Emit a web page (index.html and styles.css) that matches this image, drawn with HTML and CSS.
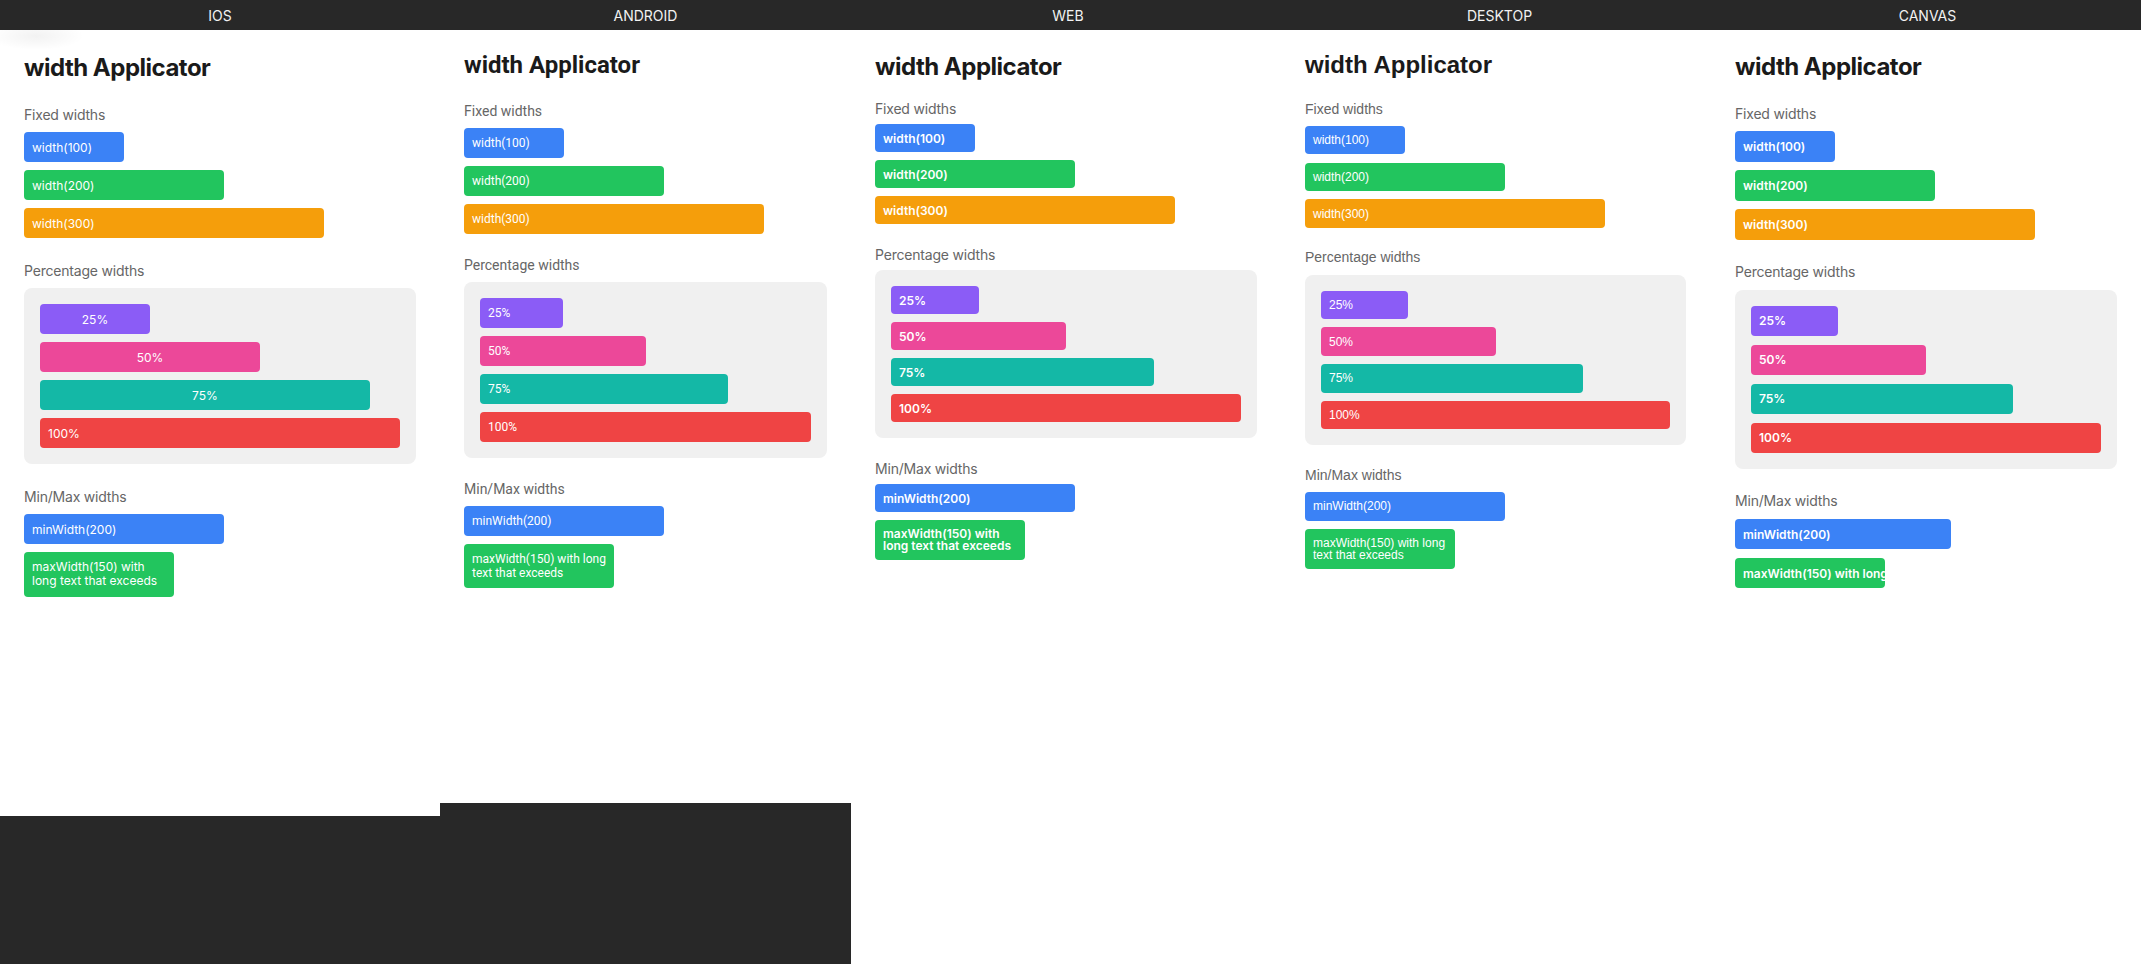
FILE: index.html
```html
<!DOCTYPE html>
<html lang="en">

<head>
    <meta charset="UTF-8" />
    <title>width Applicator</title>
    <meta name="viewport" content="width=device-width, initial-scale=1.0">
    <link rel="stylesheet" href="styles.css">
</head>

<body>
    <div class="platforms">
        <!-- iOS -->
        <section class="platform platform-ios">
            <header class="platform-label">IOS</header>
            <div class="screen">
                <h1 class="screen-title">width Applicator</h1>
                <div class="group">
                    <h2 class="group-label">Fixed widths</h2>
                    <div class="bar-list">
                        <div class="bar bar-blue w-100">width(100)</div>
                        <div class="bar bar-green w-200">width(200)</div>
                        <div class="bar bar-orange w-300">width(300)</div>
                    </div>
                </div>
                <div class="group">
                    <h2 class="group-label">Percentage widths</h2>
                    <div class="panel bar-list">
                        <div class="bar bar-purple pct-25 centered">25%</div>
                        <div class="bar bar-pink pct-50 centered">50%</div>
                        <div class="bar bar-teal pct-75 centered">75%</div>
                        <div class="bar bar-red pct-100">100%</div>
                    </div>
                </div>
                <div class="group">
                    <h2 class="group-label">Min/Max widths</h2>
                    <div class="bar-list">
                        <div class="bar bar-blue min-200">minWidth(200)</div>
                        <div class="bar bar-green max-150 multiline">maxWidth(150) with<br>long text that exceeds</div>
                    </div>
                </div>
            </div>
        </section>

        <!-- Android -->
        <section class="platform platform-android">
            <header class="platform-label">ANDROID</header>
            <div class="screen">
                <h1 class="screen-title">width Applicator</h1>
                <div class="group">
                    <h2 class="group-label">Fixed widths</h2>
                    <div class="bar-list">
                        <div class="bar bar-blue w-100">width(100)</div>
                        <div class="bar bar-green w-200">width(200)</div>
                        <div class="bar bar-orange w-300">width(300)</div>
                    </div>
                </div>
                <div class="group">
                    <h2 class="group-label">Percentage widths</h2>
                    <div class="panel bar-list">
                        <div class="bar bar-purple pct-25">25%</div>
                        <div class="bar bar-pink pct-50">50%</div>
                        <div class="bar bar-teal pct-75">75%</div>
                        <div class="bar bar-red pct-100">100%</div>
                    </div>
                </div>
                <div class="group">
                    <h2 class="group-label">Min/Max widths</h2>
                    <div class="bar-list">
                        <div class="bar bar-blue min-200">minWidth(200)</div>
                        <div class="bar bar-green max-150 multiline">maxWidth(150) with long<br>text that exceeds</div>
                    </div>
                </div>
            </div>
        </section>

        <!-- Web -->
        <section class="platform platform-web">
            <header class="platform-label">WEB</header>
            <div class="screen">
                <h1 class="screen-title">width Applicator</h1>
                <div class="group">
                    <h2 class="group-label">Fixed widths</h2>
                    <div class="bar-list">
                        <div class="bar bar-blue w-100">width(100)</div>
                        <div class="bar bar-green w-200">width(200)</div>
                        <div class="bar bar-orange w-300">width(300)</div>
                    </div>
                </div>
                <div class="group">
                    <h2 class="group-label">Percentage widths</h2>
                    <div class="panel bar-list">
                        <div class="bar bar-purple pct-25">25%</div>
                        <div class="bar bar-pink pct-50">50%</div>
                        <div class="bar bar-teal pct-75">75%</div>
                        <div class="bar bar-red pct-100">100%</div>
                    </div>
                </div>
                <div class="group">
                    <h2 class="group-label">Min/Max widths</h2>
                    <div class="bar-list">
                        <div class="bar bar-blue min-200">minWidth(200)</div>
                        <div class="bar bar-green max-150 multiline">maxWidth(150) with<br>long text that exceeds</div>
                    </div>
                </div>
            </div>
        </section>

        <!-- Desktop -->
        <section class="platform platform-desktop">
            <header class="platform-label">DESKTOP</header>
            <div class="screen">
                <h1 class="screen-title">width Applicator</h1>
                <div class="group">
                    <h2 class="group-label">Fixed widths</h2>
                    <div class="bar-list">
                        <div class="bar bar-blue w-100">width(100)</div>
                        <div class="bar bar-green w-200">width(200)</div>
                        <div class="bar bar-orange w-300">width(300)</div>
                    </div>
                </div>
                <div class="group">
                    <h2 class="group-label">Percentage widths</h2>
                    <div class="panel bar-list">
                        <div class="bar bar-purple pct-25">25%</div>
                        <div class="bar bar-pink pct-50">50%</div>
                        <div class="bar bar-teal pct-75">75%</div>
                        <div class="bar bar-red pct-100">100%</div>
                    </div>
                </div>
                <div class="group">
                    <h2 class="group-label">Min/Max widths</h2>
                    <div class="bar-list">
                        <div class="bar bar-blue min-200">minWidth(200)</div>
                        <div class="bar bar-green max-150 multiline">maxWidth(150) with long<br>text that exceeds</div>
                    </div>
                </div>
            </div>
        </section>

        <!-- Canvas -->
        <section class="platform platform-canvas">
            <header class="platform-label">CANVAS</header>
            <div class="screen">
                <h1 class="screen-title">width Applicator</h1>
                <div class="group">
                    <h2 class="group-label">Fixed widths</h2>
                    <div class="bar-list">
                        <div class="bar bar-blue w-100">width(100)</div>
                        <div class="bar bar-green w-200">width(200)</div>
                        <div class="bar bar-orange w-300">width(300)</div>
                    </div>
                </div>
                <div class="group">
                    <h2 class="group-label">Percentage widths</h2>
                    <div class="panel bar-list">
                        <div class="bar bar-purple pct-25">25%</div>
                        <div class="bar bar-pink pct-50">50%</div>
                        <div class="bar bar-teal pct-75">75%</div>
                        <div class="bar bar-red pct-100">100%</div>
                    </div>
                </div>
                <div class="group">
                    <h2 class="group-label">Min/Max widths</h2>
                    <div class="bar-list">
                        <div class="bar bar-blue min-200">minWidth(200)</div>
                        <div class="bar bar-green max-150">maxWidth(150) with long text that exceeds</div>
                    </div>
                </div>
            </div>
        </section>
    </div>
</body>

</html>
```

FILE: styles.css
```css
/* Reset */
* {
    margin: 0;
    padding: 0;
    box-sizing: border-box;
}

html,
body {
    width: 100%;
    height: 100%;
    background-color: #282828;
    font-family: Inter, "Noto Sans", sans-serif;
    overflow: hidden;
}

.platforms {
    display: flex;
    height: 100vh;
}

/* One column per platform */
.platform {
    display: flex;
    flex-direction: column;
    flex: none;
    background-color: #282828;

    --pad-top: 24px;
    --pad-left: 24px;
    --pad-right: 24px;
    --title-gap: 24px;
    --label-gap: 8px;
    --section-gap: 24px;
    --bar-h: 30px;
    --bar-gap: 8px;
}

.platform-label {
    height: 30px;
    flex: none;
    display: flex;
    align-items: center;
    justify-content: center;
    color: #f2f2f2;
    font-family: Inter, sans-serif;
    font-size: 14px;
}

.screen {
    flex: 1;
    background-color: #fff;
    padding: var(--pad-top) var(--pad-right) 0 var(--pad-left);
}

.screen-title {
    font-size: 24px;
    line-height: 29px;
    font-weight: 700;
    letter-spacing: -0.5px;
    color: #1a1a1a;
    margin-bottom: var(--title-gap);
}

.group + .group {
    margin-top: var(--section-gap);
}

.group-label {
    font-size: 14px;
    line-height: 17px;
    font-weight: 400;
    letter-spacing: -0.2px;
    color: #666;
    margin-bottom: var(--label-gap);
}

.bar-list {
    display: flex;
    flex-direction: column;
    align-items: flex-start;
    gap: var(--bar-gap);
}

.panel {
    background-color: #f0f0f0;
    border-radius: 8px;
    padding: 16px;
}

/* Bars */
.bar {
    height: var(--bar-h);
    padding: 0 8px;
    display: flex;
    align-items: center;
    border-radius: 4px;
    color: #fff;
    font-size: 12px;
    white-space: nowrap;
    overflow: hidden;
}

.bar.centered {
    justify-content: center;
}

.bar.multiline {
    height: auto;
    display: block;
    padding: 8px;
    line-height: 14.4px;
}

.bar-blue { background-color: #3b82f6; }
.bar-green { background-color: #22c55e; }
.bar-orange { background-color: #f59e0b; }
.bar-purple { background-color: #8b5cf6; }
.bar-pink { background-color: #ec4899; }
.bar-teal { background-color: #14b8a6; }
.bar-red { background-color: #ef4444; }

.w-100 { width: 100px; }
.w-200 { width: 200px; }
.w-300 { width: 300px; }
.min-200 { width: 200px; }
.max-150 { width: 150px; }

.pct-25 { width: 25%; }
.pct-50 { width: 50%; }
.pct-75 { width: 75%; }
.pct-100 { width: 100%; }

/* iOS */
.platform-ios {
    width: 440px;
    --pad-top: 23px;
    --label-gap: 9px;
}

.platform-ios .screen {
    flex: none;
    height: 786px;
    background: radial-gradient(ellipse 48px 14px at 36px 6px, rgba(0, 0, 0, 0.05), rgba(0, 0, 0, 0)), #fff;
}

.platform-ios .pct-25 { width: 110px; }
.platform-ios .pct-50 { width: 220px; }
.platform-ios .pct-75 { width: 330px; }

/* Android */
.platform-android {
    width: 411px;
    font-family: Roboto, sans-serif;
    --pad-top: 21px;
    --title-gap: 23px;
    --section-gap: 23px;
}

.platform-android .screen {
    flex: none;
    height: 773px;
}

.platform-android .screen-title,
.platform-android .group-label {
    letter-spacing: 0;
}

.platform-android .bar.multiline {
    line-height: 14px;
}

/* Web */
.platform-web {
    width: 434px;
    --pad-top: 22px;
    --pad-right: 28px;
    --title-gap: 19px;
    --label-gap: 7px;
    --section-gap: 22px;
    --bar-h: 28px;
}

.platform-web .bar {
    font-weight: 600;
}

.platform-web .bar.multiline {
    line-height: 12px;
}

/* Desktop */
.platform-desktop {
    width: 429px;
    font-family: "Liberation Sans", Arial, sans-serif;
    --pad-top: 20px;
    --pad-left: 20px;
    --pad-right: 28px;
    --title-gap: 21.7px;
    --label-gap: 8.3px;
    --section-gap: 21.5px;
    --bar-h: 28.5px;
    --bar-gap: 8.2px;
}

.platform-desktop .screen-title,
.platform-desktop .group-label {
    letter-spacing: 0;
}

.platform-desktop .bar.multiline {
    line-height: 12px;
}

/* Canvas */
.platform-canvas {
    width: 427px;
    --pad-top: 21.5px;
    --pad-left: 21px;
    --pad-right: 24.3px;
    --title-gap: 24.4px;
    --label-gap: 9.5px;
    --section-gap: 23px;
    --bar-h: 30.7px;
    --bar-gap: 8.3px;
}

.platform-canvas .bar {
    font-weight: 600;
}

.platform-canvas .min-200 {
    width: 216px;
}

.platform-canvas .max-150 {
    overflow: hidden;
}
```
